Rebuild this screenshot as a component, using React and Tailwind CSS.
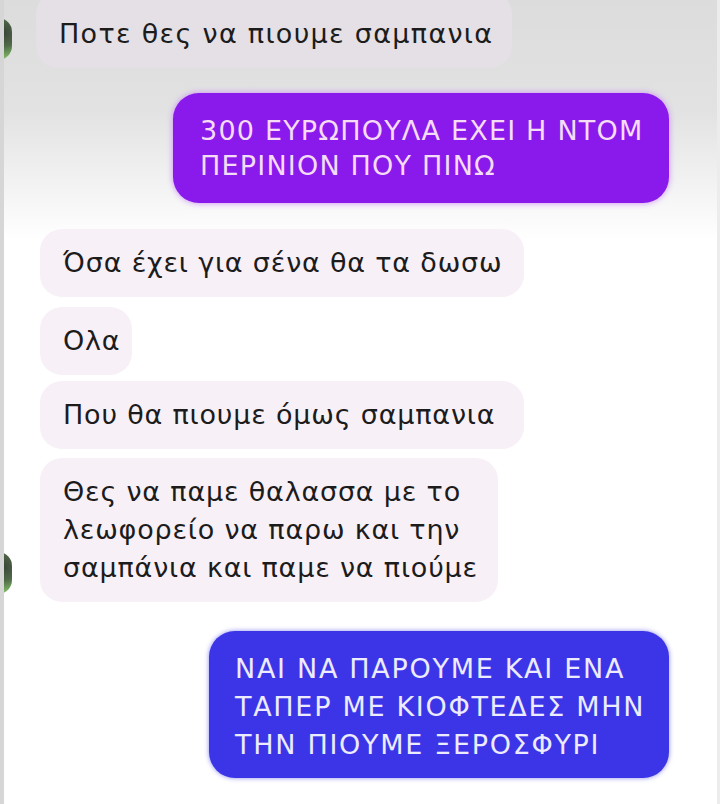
import React from 'react';

const font = { fontFamily: '"DejaVu Sans", "Liberation Sans", "Noto Sans", sans-serif' };

// tiny clipped avatar peeking out at the left edge
const Avatar = ({ show }) => (
  <div className="w-[8px] shrink-0 self-end overflow-hidden h-[42px] mb-[8px]">
    {show && (
      <div className="w-[28px] h-[42px] -ml-[20px] rounded-full bg-[radial-gradient(circle_at_70%_35%,#3a4638_0%,#4f6848_40%,#76ad60_70%,#dfe9da_100%)]" />
    )}
  </div>
);

const Incoming = ({ children, width, avatar, className = '' }) => (
  <div className={`flex items-end ${className}`}>
    <Avatar show={avatar} />
    <div
      className={`ml-[28px] rounded-[22px] bg-[#f8f0f7] px-[23px] py-[15px] text-[27px] leading-[38px] tracking-[0.8px] text-[#1c1c1c] whitespace-nowrap ${width}`}
    >
      {children}
    </div>
  </div>
);

const Outgoing = ({ children, color, className = '' }) => (
  <div className={`flex justify-end pr-[48px] ${className}`}>
    <div className={`rounded-[26px] ${color}`}>{children}</div>
  </div>
);

export default function App() {
  return (
    <div
      style={font}
      className="w-[720px] h-[804px] overflow-hidden border-l-[4px] border-[#d6d6d6] bg-[linear-gradient(to_bottom,#dcdcdc_0px,#e2e2e2_110px,#f6f6f6_200px,#ffffff_240px)]"
    >
      <div className="flex flex-col border-r-[3px] border-[#ececec] h-full">
        {/* first message, cut at the top */}
        <div className="flex items-end -mt-[8px]">
          <Avatar show />
          <div className="ml-[24px] rounded-[22px] bg-[#e4e0e5] px-[23px] pt-[23px] pb-[15px] text-[27px] leading-[38px] tracking-[1.3px] text-[#1c1c1c] w-[476px] whitespace-nowrap">
            Ποτε θες να πιουμε σαμπανια
          </div>
        </div>

        <Outgoing className="mt-[25px]" color="bg-[#8a1aec] shadow-[0_0_6px_#c98cf5]">
          <div className="w-[496px] px-[27px] py-[20px] text-[27px] leading-[35px] tracking-[1.2px] text-[#f5dcf6] whitespace-nowrap">
            300 ΕΥΡΩΠΟΥΛΑ ΕΧΕΙ Η ΝΤΟΜ
            <br />
            ΠΕΡΙΝΙΟΝ ΠΟΥ ΠΙΝΩ
          </div>
        </Outgoing>

        <Incoming className="mt-[26px]" width="w-[484px]">
          Όσα έχει για σένα θα τα δωσω
        </Incoming>
        <Incoming className="mt-[10px]" width="w-[92px]">
          Ολα
        </Incoming>
        <Incoming className="mt-[6px]" width="w-[484px]">
          Που θα πιουμε όμως σαμπανια
        </Incoming>
        <Incoming className="mt-[9px]" width="w-[458px]" avatar>
          Θες να παμε θαλασσα με το
          <br />
          λεωφορείο να παρω και την
          <br />
          σαμπάνια και παμε να πιούμε
        </Incoming>

        <Outgoing className="mt-[29px]" color="bg-[#3c35e8] shadow-[0_0_5px_#8f8cf0]">
          <div className="w-[460px] px-[26px] pt-[19px] pb-[14px] text-[27px] leading-[38px] tracking-[1.7px] text-[#ecebff] whitespace-nowrap">
            ΝΑΙ ΝΑ ΠΑΡΟΥΜΕ ΚΑΙ ΕΝΑ
            <br />
            ΤΑΠΕΡ ΜΕ ΚΙΟΦΤΕΔΕΣ ΜΗΝ
            <br />
            ΤΗΝ ΠΙΟΥΜΕ ΞΕΡΟΣΦΥΡΙ
          </div>
        </Outgoing>
      </div>
    </div>
  );
}
